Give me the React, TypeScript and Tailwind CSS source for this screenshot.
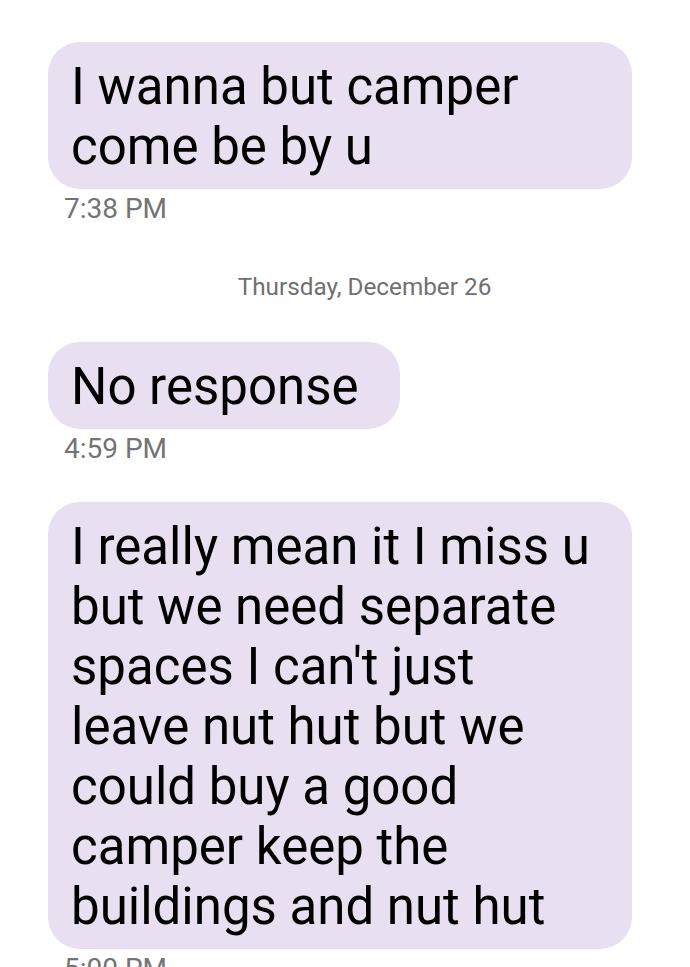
import React from 'react';

type Msg = { lines: string[]; time: string; fit?: boolean };

const before: Msg[] = [
  { lines: ['I wanna but camper', 'come be by u'], time: '7:38 PM' },
];

const after: Msg[] = [
  { lines: ['No response'], time: '4:59 PM', fit: true },
  {
    lines: [
      'I really mean it I miss u',
      'but we need separate',
      "spaces I can't just",
      'leave nut hut but we',
      'could buy a good',
      'camper keep the',
      'buildings and nut hut',
    ],
    time: '5:00 PM',
  },
];

const Bubble: React.FC<{ msg: Msg }> = ({ msg }) => (
  <div className="flex flex-col items-start">
    <div
      className={`bg-[#e8dff1] rounded-[32px] pt-[15px] pb-[12px] pl-[23px] text-black text-[51px] leading-[60px] ${
        msg.fit ? 'pr-[41px]' : 'w-[584px] pr-[16px]'
      }`}
    >
      {msg.lines.map((l, i) => (
        <div key={i} className="whitespace-nowrap">
          {l}
        </div>
      ))}
    </div>
    <div className="mt-[3px] ml-[16px] text-[28px] leading-[34px] text-[#747474]">{msg.time}</div>
  </div>
);

const App: React.FC = () => {
  return (
    <div
      className="min-h-screen bg-white px-[48px] pt-[42px]"
      style={{ fontFamily: 'Roboto, "Noto Sans", sans-serif' }}
    >
      {before.map((m, i) => (
        <Bubble key={i} msg={m} />
      ))}

      {/* day separator */}
      <div className="mt-[46px] mb-[40px] pl-[39px] text-center text-[24.3px] leading-[30px] text-[#707070]">
        Thursday, December 26
      </div>

      <div className="flex flex-col gap-[36px]">
        {after.map((m, i) => (
          <Bubble key={i} msg={m} />
        ))}
      </div>
    </div>
  );
};

export default App;
